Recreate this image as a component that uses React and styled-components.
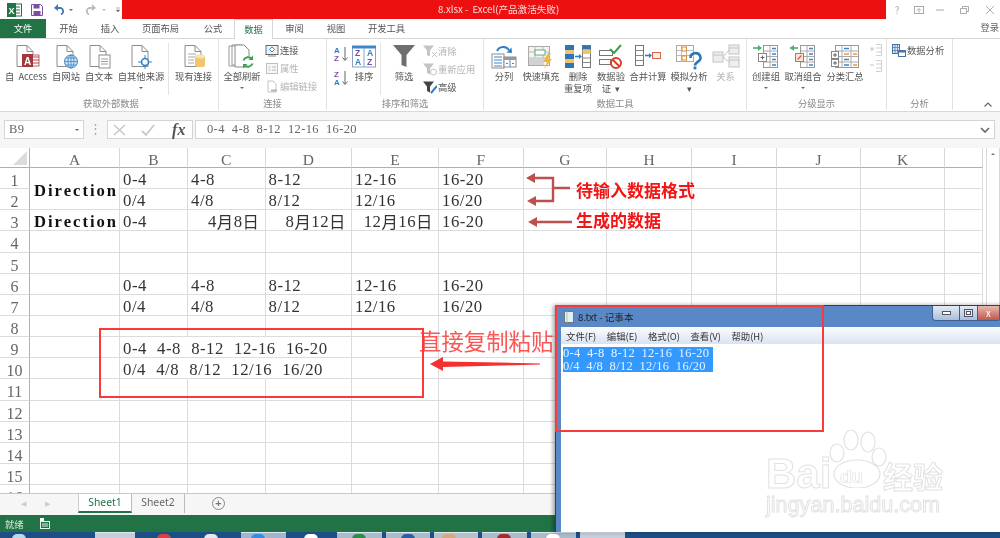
import React from "react";
import styled, { createGlobalStyle } from "styled-components";

const CJK = '"Noto Sans CJK SC", "Noto Sans", sans-serif';
const SERIF = '"Liberation Serif", "Noto Sans CJK SC", serif';

const Global = createGlobalStyle`
  html, body { margin: 0; padding: 0; background: #fff; overflow: hidden; }
  * { box-sizing: border-box; }
`;

const Page = styled.div`
  position: relative;
  width: 1000px;
  height: 538px;
  overflow: hidden;
  display: flex;
  flex-direction: column;
  font-family: ${CJK};
  font-size: 9.3px;
  color: #555;
  background: #fff;
  filter: blur(0.5px);
`;

/* title bar */
const TitleBar = styled.div`
  height: 19px;
  display: flex;
  flex: none;
`;
const Qat = styled.div`
  width: 122px;
  display: flex;
  align-items: center;
  padding-left: 7px;
`;
const QatSlot = styled.span`
  width: ${(p) => p.$w}px;
  display: flex;
  align-items: center;
`;
const Caret = styled.i`
  display: block;
  width: 0;
  height: 0;
  border-left: 2px solid transparent;
  border-right: 2px solid transparent;
  border-top: 2.5px solid ${(p) => p.$color || "#666"};
`;
const RedTitle = styled.div`
  width: 764px;
  background: #ec1010;
  color: #fdd;
  font-size: 9.6px;
  line-height: 19px;
  padding-left: 316px;
  white-space: pre;
`;
const WinButtons = styled.div`
  flex: 1;
  display: flex;
`;
const WinBtn = styled.span`
  width: ${(p) => p.$w}px;
  display: flex;
  align-items: center;
  justify-content: center;
  color: #aaa;
  font-size: 10px;
`;

/* tabs */
const TabRow = styled.div`
  height: 20px;
  flex: none;
  display: flex;
  border-bottom: 1px solid #d6d6d6;
`;
const Tab = styled.div`
  width: ${(p) => p.$w}px;
  height: ${(p) => (p.$active ? 20 : 19)}px;
  line-height: 19px;
  text-align: center;
  color: ${(p) => (p.$file ? "#fff" : p.$active ? "#217346" : "#555")};
  background: ${(p) => (p.$file ? "#217346" : "#fff")};
  border: ${(p) => (p.$active ? "1px solid #d6d6d6" : "none")};
  border-bottom: none;
  position: relative;
  z-index: 1;
`;
const Login = styled.div`
  margin-left: auto;
  line-height: 17px;
  padding-right: 1px;
  color: #666;
`;

/* ribbon */
const Ribbon = styled.div`
  height: 73px;
  flex: none;
  display: flex;
  border-bottom: 1px solid #d8d8d8;
`;
const Group = styled.section`
  width: ${(p) => p.$w}px;
  flex: none;
  display: flex;
  flex-direction: column;
  padding-left: ${(p) => p.$pad || 0}px;
  margin-bottom: 1px;
  border-right: 1px solid #e2e2e2;
`;
const GroupBody = styled.div`
  flex: 1;
  display: flex;
`;
const GroupLabel = styled.div`
  height: 13px;
  line-height: 13px;
  text-align: center;
  color: #888;
`;
const Big = styled.div`
  width: ${(p) => p.$w}px;
  flex: none;
  display: flex;
  flex-direction: column;
  align-items: center;
  padding-top: 5px;
  line-height: 12px;
  white-space: nowrap;
  word-spacing: 2px;
  color: ${(p) => (p.$off ? "#b5b5b5" : "#555")};
  svg { display: block; height: 26px; flex: none; }
`;
const Arrow = styled(Caret)`
  margin-top: 5px;
`;
const Divider = styled.div`
  width: 1px;
  flex: none;
  margin: 4px ${(p) => p.$m || 0}px 2px;
  background: #e4e4e4;
`;
const SmallCol = styled.div`
  width: ${(p) => p.$w}px;
  flex: none;
  display: flex;
  flex-direction: column;
  gap: ${(p) => p.$gap ?? 4}px;
  padding-top: ${(p) => p.$top ?? 4}px;
  padding-left: ${(p) => p.$left || 0}px;
`;
const Small = styled.div`
  height: 14px;
  display: flex;
  align-items: center;
  gap: 1px;
  white-space: nowrap;
  color: ${(p) => (p.$off ? "#b5b5b5" : "#555")};
  svg { flex: none; }
`;
const Collapse = styled.div`
  flex: 1;
  display: flex;
  align-items: flex-end;
  justify-content: flex-end;
  padding: 0 8px 4px 0;
`;

/* formula bar */
const FormulaBar = styled.div`
  height: 36px;
  flex: none;
  display: flex;
  align-items: flex-start;
  padding: 8px 5px 0 4px;
  background: #f6f6f6;
  font-family: ${SERIF};
  font-size: 12.5px;
  letter-spacing: 0.37px;
  word-spacing: 3.5px;
`;
const Field = styled.div`
  height: 19px;
  width: ${(p) => (p.$w ? `${p.$w}px` : "auto")};
  flex: ${(p) => (p.$w ? "none" : 1)};
  margin-left: ${(p) => p.$gap || 0}px;
  display: flex;
  align-items: center;
  background: #fff;
  border: 1px solid #d4d4d4;
  color: #666;
  padding: 0 4px;
`;
const FormulaText = styled.span`
  padding-left: 7px;
  margin-right: auto;
`;
const NameCaret = styled(Caret)`
  margin-left: auto;
`;
const Dots = styled.div`
  width: 23px;
  flex: none;
  text-align: center;
  line-height: 18px;
  color: #aaa;
`;
const Fx = styled.span`
  font-style: italic;
  font-weight: bold;
  font-size: 16px;
  color: #555;
  margin-left: auto;
  padding-right: 2px;
`;

/* sheet */
const SheetArea = styled.div`
  height: 345px;
  flex: none;
  display: flex;
  overflow: hidden;
`;
const Grid = styled.div`
  width: 983px;
  height: 345px;
  flex: none;
  display: grid;
  grid-template-columns: 30px 90px 68px 77.5px 86.5px 87px 84.5px 83.5px 85px 85px 84px 84px 38px;
  grid-template-rows: 20px repeat(16, 21.15px);
  font-family: ${SERIF};
  font-size: 16.8px;
  line-height: 21px;
  color: #333;
  overflow: hidden;
`;
const Corner = styled.div`
  position: relative;
  border-right: 1px solid #b0b0b0;
  border-bottom: 1px solid #b0b0b0;
  &::after {
    content: "";
    position: absolute;
    right: 2px;
    bottom: 2px;
    width: 0;
    height: 0;
    border-left: 14px solid transparent;
    border-bottom: 14px solid #dcdcdc;
  }
`;
const ColHead = styled.div`
  text-align: center;
  color: #666;
  font-size: 15.5px;
  line-height: 23px;
  border-right: 1px solid #d8d8d8;
  border-bottom: 1px solid #b0b0b0;
`;
const RowHead = styled.div`
  text-align: center;
  color: #666;
  font-size: 16px;
  line-height: 25px;
  border-right: 1px solid #b0b0b0;
  border-bottom: 1px solid #dcdcdc;
`;
const Cell = styled.div`
  grid-row: ${(p) => (p.$span ? `span ${p.$span}` : "auto")};
  display: flex;
  align-items: center;
  justify-content: ${(p) => (p.$right ? "flex-end" : "flex-start")};
  padding: 3px ${(p) => (p.$right ? 5 : 0)}px 0 ${(p) => (p.$bold ? 4 : 3)}px;
  white-space: pre;
  letter-spacing: ${(p) => (p.$bold ? 2 : 0.5)}px;
  word-spacing: 5.5px;
  min-width: 0;
  font-size: ${(p) => (p.$bold ? "16.6px" : "16.8px")};
  font-weight: ${(p) => (p.$bold ? 700 : 400)};
  color: ${(p) => (p.$bold ? "#111" : "#333")};
  border-right: 1px solid ${(p) => (p.$flow ? "transparent" : "#dcdcdc")};
  border-bottom: 1px solid #dcdcdc;
`;
const Wide = styled.span`
  font-family: ${CJK};
  font-size: 16.4px;
`;
const Scroll = styled.div`
  width: 14px;
  margin-left: 3px;
  flex: none;
  border: 1px solid #d8d8d8;
  border-top: none;
  display: flex;
  justify-content: center;
  padding-top: 5px;
`;
const ScrollUp = styled(Caret)`
  transform: rotate(180deg);
`;

/* sheet tabs and status */
const SheetTabs = styled.div`
  height: 22px;
  flex: none;
  display: flex;
  background: #f6f6f6;
  border-top: 1px solid #c8c8c8;
  font-family: "Noto Sans", sans-serif;
  font-size: 10.4px;
  color: #666;
`;
const NavArrow = styled.span`
  width: ${(p) => p.$w}px;
  flex: none;
  padding-left: ${(p) => p.$pad}px;
  line-height: 19px;
  color: #ccc;
  font-size: 7px;
`;
const SheetTab = styled.div`
  width: ${(p) => p.$w}px;
  height: 19px;
  flex: none;
  line-height: 17px;
  text-align: center;
  color: ${(p) => (p.$active ? "#217346" : "#666")};
  background: ${(p) => (p.$active ? "#fff" : "transparent")};
  border-bottom: ${(p) => (p.$active ? "2px solid #217346" : "none")};
  border-left: ${(p) => (p.$active ? "1px solid #ccc" : "none")};
  border-right: 1px solid #bbb;
`;
const AddSheet = styled.div`
  margin: 3px 0 0 27px;
  width: 13px;
  height: 13px;
  border: 1px solid #888;
  border-radius: 50%;
  text-align: center;
  line-height: 10px;
  font-size: 11px;
  font-weight: 700;
  color: #777;
`;
const StatusBar = styled.div`
  height: 17px;
  flex: none;
  background: #217346;
  color: #d8e8df;
  display: flex;
  align-items: center;
  gap: 16px;
  padding-left: 5px;
`;
const Taskbar = styled.div`
  height: 6px;
  flex: none;
  display: flex;
  background: #1d4f86;
`;
const TaskBtn = styled.div`
  position: relative;
  width: ${(p) => p.$w}px;
  flex: none;
  margin-right: ${(p) => p.$gap || 0}px;
  background: ${(p) => p.$bg || "transparent"};
  border-top: 1px solid ${(p) => (p.$bg ? "#dfe7f0" : "transparent")};
  &::after {
    content: "";
    position: absolute;
    left: ${(p) => p.$dotX || 0}px;
    top: 1px;
    width: ${(p) => (p.$dot ? 14 : 0)}px;
    height: 8px;
    border-radius: 5px 5px 0 0;
    background: ${(p) => p.$dot || "none"};
  }
`;

/* notepad window */
const Notepad = styled.div`
  position: absolute;
  left: 555px;
  top: 305px;
  width: 452px;
  height: 227px;
  display: flex;
  flex-direction: column;
  background: #5a88c6;
  border: 1px solid #3d3d3d;
  border-right: none;
  border-bottom: none;
  box-shadow: -2px 0 4px rgba(0, 0, 0, 0.35);
  padding: 0 0 0 5px;
`;
const NoteTitle = styled.div`
  height: 21px;
  flex: none;
  display: flex;
  align-items: center;
  gap: 4px;
  padding-left: 3px;
  color: #222;
  font-size: 9.6px;
`;
const NoteButtons = styled.div`
  margin-left: auto;
  margin-right: 6px;
  align-self: flex-start;
  display: flex;
  height: 15px;
  border: 1px solid #3f5f8f;
  border-top: none;
  border-radius: 0 0 4px 4px;
  overflow: hidden;
`;
const NoteBtn = styled.span`
  width: ${(p) => p.$w}px;
  display: flex;
  align-items: center;
  justify-content: center;
  color: #fff;
  background: ${(p) => p.$bg || "linear-gradient(#e4ebf4, #a9bfdb)"};
  border-right: 1px solid #3f5f8f;
`;
const NoteMenu = styled.div`
  height: 17px;
  flex: none;
  display: flex;
  align-items: center;
  padding-left: 5px;
  gap: 10.5px;
  background: linear-gradient(#fbfcfe, #d9e3f2);
  color: #333;
  font-size: 9.4px;
  white-space: nowrap;
`;
const NoteBody = styled.div`
  flex: 1;
  background: #fff;
  padding: 3px 0 0 2px;
  font-family: ${SERIF};
  font-size: 12.5px;
  letter-spacing: 0.3px;
  word-spacing: 3px;
  line-height: 12.5px;
`;
const Picked = styled.div`
  width: 150px;
  background: #3399ff;
  color: #e8f3ff;
  white-space: pre;
`;

/* overlays */
const RedBox = styled.div`
  position: absolute;
  left: ${(p) => p.$x}px;
  top: ${(p) => p.$y}px;
  width: ${(p) => p.$w}px;
  height: ${(p) => p.$h}px;
  border: 2px solid #f83a3a;
  pointer-events: none;
`;
const Note = styled.div`
  position: absolute;
  left: ${(p) => p.$x}px;
  top: ${(p) => p.$y}px;
  font-family: ${CJK};
  white-space: nowrap;
  color: #f31414;
  font-weight: 700;
  font-size: 17px;
  line-height: 20px;
`;
const PasteNote = styled(Note)`
  font-weight: 400;
  font-size: 22.4px;
  line-height: 28px;
  color: #fb5555;
`;
const ArrowLayer = styled.svg`
  position: absolute;
  left: 520px;
  top: 170px;
`;
const PasteArrow = styled.svg`
  position: absolute;
  left: 428px;
  top: 356px;
`;
const Watermark = styled.div`
  position: absolute;
  left: 766px;
  top: 428px;
  width: 186px;
  height: 90px;
  color: #fff;
  -webkit-text-stroke: 1px #e2e2e2;
  font-family: "Liberation Sans", sans-serif;
  font-weight: 700;
`;
const MarkBai = styled.span`
  position: absolute;
  left: 0;
  top: 29px;
  font-size: 42px;
  line-height: 34px;
`;
const MarkCn = styled.span`
  position: absolute;
  left: 117px;
  top: 31px;
  font-family: ${CJK};
  font-size: 30px;
  line-height: 32px;
`;
const MarkUrl = styled.span`
  position: absolute;
  left: 0;
  top: 65px;
  font-size: 21.6px;
  line-height: 24px;
  font-weight: 400;
  white-space: nowrap;
`;
const MarkPaw = styled.svg`
  position: absolute;
  left: 62px;
  top: 0;
`;
const MarkDu = styled.span`
  position: absolute;
  left: 74px;
  top: 39px;
  font-size: 19px;
  line-height: 20px;
  -webkit-text-stroke: 0.7px #e2e2e2;
`;

/* icons */
const Doc = ({ children, w = 28 }) => (
  <svg width={w} height="26" viewBox={`0 0 ${w} 26`}>
    <path d="M5 1.5h10l6 6v15H5z" fill="#fff" stroke="#8c8c8c" />
    <path d="M15 1.5v6h6" fill="none" stroke="#8c8c8c" />
    {children}
  </svg>
);
const AccessIcon = () => (
  <Doc>
    <rect x="14" y="11" width="13" height="11" fill="#fff" stroke="#b86a6c" />
    <path d="M21 13h6M21 16h6M21 19h6" stroke="#b04a4d" />
    <rect x="10" y="10" width="11" height="13" fill="#a4373a" />
    <text x="12" y="20.5" fontSize="10" fontWeight="700" fill="#fff" fontFamily="Liberation Sans">A</text>
  </Doc>
);
const WebIcon = () => (
  <Doc>
    <circle cx="19" cy="17.5" r="6.5" fill="#cfe3f5" stroke="#3f86c8" />
    <path d="M12.5 17.5h13M19 11v13M14 14h10M14 21h10" stroke="#3f86c8" strokeWidth=".8" />
    <ellipse cx="19" cy="17.5" rx="3" ry="6.5" fill="none" stroke="#3f86c8" strokeWidth=".8" />
  </Doc>
);
const TextIcon = () => (
  <Doc>
    <rect x="14" y="11" width="11" height="13" fill="#fff" stroke="#8c8c8c" />
    <path d="M16 15h7M16 17.5h7M16 20h7" stroke="#999" />
  </Doc>
);
const OtherIcon = () => (
  <Doc>
    <path d="M18 11v14M11 18h14" stroke="#3f86c8" />
    <circle cx="18" cy="18" r="3.5" fill="#fff" stroke="#2f7fc8" strokeWidth="1.6" />
  </Doc>
);
const ExistingIcon = () => (
  <Doc>
    <path d="M8 10h8M8 13h8M8 16h6M8 19h6" stroke="#aaa" />
    <rect x="15" y="12" width="10" height="11" rx="2" fill="#f0c56c" />
    <ellipse cx="20" cy="12.5" rx="5" ry="2" fill="#f8e2ae" />
  </Doc>
);
const RefreshIcon = () => (
  <svg width="30" height="26" viewBox="0 0 30 26">
    <path d="M2 2h10v20H2z M5 1h10v20H5z" fill="#fff" stroke="#999" />
    <path d="M8 1h9l5 5v17H8z" fill="#fff" stroke="#8c8c8c" />
    <circle cx="21" cy="18" r="6" fill="#fff" />
    <path d="M16.5 16.5a5 5 0 0 1 8.5-1.5M25.5 19.5a5 5 0 0 1-8.5 1.5" fill="none" stroke="#3ea04e" strokeWidth="2" />
    <path d="M26 11.5v4.5h-4.5zM16 24.5V20h4.5z" fill="#3ea04e" />
  </svg>
);
const ConnIcon = () => (
  <svg width="14" height="13" viewBox="0 0 14 13">
    <rect x="1" y="1.5" width="12" height="9" fill="#eaf1f8" stroke="#6a6a6a" />
    <path d="M7 3l2.5 2.5L7 8 4.5 5.5z" fill="#fff" stroke="#3f86c8" />
    <path d="M3 12h8" stroke="#888" />
  </svg>
);
const PropIcon = () => (
  <svg width="14" height="13" viewBox="0 0 14 13">
    <rect x="1.5" y="1.5" width="11" height="10" fill="#f6f6f6" stroke="#c0c0c0" />
    <path d="M3.5 5h2M3.5 8h2M7 5h4M7 8h4" stroke="#bbb" />
  </svg>
);
const LinkIcon = () => (
  <svg width="14" height="13" viewBox="0 0 14 13">
    <path d="M3 1h5l3 3v8H3z" fill="#fff" stroke="#c4c4c4" />
    <path d="M6 10.5h6" stroke="#b5b5b5" strokeWidth="2" />
  </svg>
);
const SortSmall = ({ top, bottom, cTop, cBottom }) => (
  <svg width="18" height="18" viewBox="0 0 18 18">
    <text x="1" y="8" fontSize="8" fontWeight="700" fill={cTop} fontFamily="Liberation Sans">{top}</text>
    <text x="1" y="16" fontSize="8" fontWeight="700" fill={cBottom} fontFamily="Liberation Sans">{bottom}</text>
    <path d="M12 2v13M9.5 12.5L12 15.5l2.5-3" fill="none" stroke="#666" />
  </svg>
);
const SortBig = () => (
  <svg width="24" height="26" viewBox="0 0 24 26">
    <rect x=".5" y="3" width="23" height="20" fill="#fff" stroke="#8ba4bd" />
    <rect x="0" y="1.5" width="24" height="3" fill="#3f86c8" />
    <path d="M12 4v19" stroke="#8ba4bd" />
    <g fontSize="8.5" fontWeight="700" fontFamily="Liberation Sans">
      <text x="3" y="12" fill="#7b4ea3">Z</text>
      <text x="3" y="21" fill="#2f7fc8">A</text>
      <text x="15" y="12" fill="#2f7fc8">A</text>
      <text x="15" y="21" fill="#7b4ea3">Z</text>
    </g>
  </svg>
);
const Funnel = () => (
  <svg width="24" height="26" viewBox="0 0 24 26">
    <path d="M1 1h22L14.5 11v12l-5-2V11z" fill="#6e6e6e" />
  </svg>
);
const SmallFunnel = ({ color = "#c4c4c4", children }) => (
  <svg width="14" height="13" viewBox="0 0 14 13">
    <path d="M0 .5h11L7 5.5v6l-3-1.5V5.5z" fill={color} />
    {children}
  </svg>
);
const SplitIcon = () => (
  <svg width="26" height="26" viewBox="0 0 26 26">
    <path d="M6 7a7 7 0 0 1 12-1" fill="none" stroke="#2f7fc8" strokeWidth="2" />
    <path d="M15.5 8.5L21 9l-.5-5.5z" fill="#2f7fc8" />
    <rect x="1" y="10" width="12" height="14" fill="#fff" stroke="#8c8c8c" />
    <path d="M3 13h8M3 16h8M3 19h8M3 22h8" stroke="#3f86c8" />
    <rect x="13" y="13" width="12" height="10" fill="#fff" stroke="#8c8c8c" />
    <rect x="13" y="13" width="12" height="3" fill="#999" />
    <path d="M19 16v7M15 19.5h2M21 19.5h2" stroke="#3f86c8" />
  </svg>
);
const FlashIcon = () => (
  <svg width="26" height="26" viewBox="0 0 26 26">
    <rect x=".5" y="2.5" width="21" height="19" fill="#f3f3f3" stroke="#aaa" />
    <path d="M.5 8h21M.5 14h21M7 2.5v19M15 2.5v19" stroke="#bbb" />
    <rect x="7" y="6" width="10" height="5" fill="#fff" stroke="#67a87a" />
    <rect x="1" y="14" width="14" height="7" fill="#d2d2d2" />
    <path d="M20 9l-5 9h4l-3 7 8-10h-4l3-6z" fill="#f2b63c" />
  </svg>
);
const DedupeIcon = () => (
  <svg width="28" height="26" viewBox="0 0 28 26">
    <rect x="1" y="1" width="9" height="23" fill="#2e75b6" />
    <rect x="1" y="6" width="9" height="4" fill="#efc46d" />
    <rect x="1" y="15" width="9" height="4" fill="#efc46d" />
    <rect x="18.5" y="1.5" width="8" height="22" fill="#fff" stroke="#777" />
    <rect x="18.5" y="1.5" width="8" height="4" fill="#2e75b6" />
    <rect x="18.5" y="6" width="8" height="4" fill="#efc46d" />
    <path d="M19 14h7M19 18.5h7" stroke="#888" />
    <path d="M11 12.5h5" stroke="#2f7fc8" strokeWidth="1.6" />
    <path d="M15 10l3 2.5-3 2.5z" fill="#2f7fc8" />
  </svg>
);
const ValidIcon = () => (
  <svg width="24" height="26" viewBox="0 0 24 26">
    <rect x=".5" y="6.5" width="13" height="5" fill="#fff" stroke="#777" />
    <rect x=".5" y="15.5" width="11" height="5" fill="#fff" stroke="#777" />
    <path d="M11 5l4 4 7-8" fill="none" stroke="#3ea04e" strokeWidth="2" />
    <circle cx="17" cy="19" r="5" fill="#fff" stroke="#d5402b" strokeWidth="2" />
    <path d="M13.5 15.5l7 7" stroke="#d5402b" strokeWidth="2" />
  </svg>
);
const MergeIcon = () => (
  <svg width="28" height="26" viewBox="0 0 28 26">
    <rect x="1.5" y="1.5" width="8" height="20" fill="#fff" stroke="#777" />
    <path d="M2 6.5h7M2 11.5h7M2 16.5h7" stroke="#888" />
    <path d="M11 11.5h5" stroke="#2f7fc8" strokeWidth="1.6" />
    <path d="M15 9l3 2.5-3 2.5z" fill="#2f7fc8" />
    <rect x="18.5" y="8.5" width="8" height="6" fill="#fbeee8" stroke="#d9674a" />
  </svg>
);
const WhatIfIcon = () => (
  <svg width="28" height="26" viewBox="0 0 28 26">
    <rect x="1.5" y="1.5" width="17" height="16" fill="#fff" stroke="#aaa" />
    <path d="M1.5 6.5h17M1.5 11.5h17M6.5 1.5v16M11.5 1.5v16" stroke="#bbb" />
    <rect x="7" y="3" width="4.5" height="4" fill="#fff" stroke="#e58a2c" />
    <rect x="7" y="12" width="4.5" height="4" fill="#fff" stroke="#e58a2c" />
    <path d="M15.5 14a5 4.5 0 1 1 7.5 3.6c-2 1.3-3 2-3 3.9" fill="none" stroke="#2e75b6" strokeWidth="2.6" />
    <rect x="18.6" y="22.5" width="2.8" height="2.8" fill="#2e75b6" />
  </svg>
);
const RelIcon = () => (
  <svg width="28" height="26" viewBox="0 0 28 26">
    <rect x="1" y="8" width="10" height="10" fill="#eee" stroke="#c4c4c4" />
    <rect x="17" y="1" width="10" height="9" fill="#eee" stroke="#c4c4c4" />
    <rect x="17" y="13" width="10" height="10" fill="#eee" stroke="#c4c4c4" />
    <path d="M1 11h10M17 4h10M17 16h10M11 13l6-7M11 13l6 5" stroke="#c4c4c4" />
  </svg>
);
const OutlineIcon = ({ arrow, box }) => (
  <svg width="26" height="26" viewBox="0 0 26 26">
    <rect x="10.5" y="1.5" width="14" height="22" fill="#fff" stroke="#999" />
    <path d="M17 1.5v22M11 7h13M11 12.5h13M11 18h13" stroke="#aaa" />
    <path d="M19 4.5h4M19 10h4M19 15.5h4M19 21h4" stroke="#3f86c8" strokeWidth="1.4" />
    <rect x="5.5" y="9.5" width="8" height="8" fill={box === "red" ? "#fbe3da" : "#fff"} stroke={box === "red" ? "#d9674a" : "#888"} />
    {box === "red" ? (
      <path d="M7.5 15.5l4-4" stroke="#d9674a" strokeWidth="1.4" />
    ) : (
      <path d="M7.5 13.5h4M9.5 11.5v4" stroke="#666" />
    )}
    <path d="M0 4h8" stroke={arrow} strokeWidth="1.6" />
    {box === "red" ? (
      <path d="M0 4l4-3v6z" fill={arrow} />
    ) : (
      <path d="M9 4L5 1v6z" fill={arrow} />
    )}
  </svg>
);
const SubtotalIcon = () => (
  <svg width="30" height="26" viewBox="0 0 30 26">
    <rect x="5.5" y="1.5" width="23" height="22" fill="#fff" stroke="#999" />
    <path d="M12 1.5v22M21 1.5v22M6 7h22M6 12.5h22M6 18h22" stroke="#aaa" />
    <path d="M14 4.5h5M14 15.5h5M14 21h5" stroke="#3f86c8" strokeWidth="1.4" />
    <path d="M14 10h5M23 10h4M23 21h4" stroke="#ec9a3a" strokeWidth="1.4" />
    <rect x="1.5" y="7.5" width="7" height="7" fill="#fff" stroke="#888" />
    <rect x="1.5" y="15.5" width="7" height="7" fill="#fff" stroke="#888" />
    <path d="M3 11h4M5 9v4M3 19h4M5 17v4" stroke="#666" />
  </svg>
);
const Fold = ({ plus }) => (
  <svg width="14" height="14" viewBox="0 0 14 14">
    <path d="M1 6h4" stroke="#c4c4c4" />
    {plus && <path d="M3 4v4" stroke="#c4c4c4" />}
    <path d="M7 1.5h5.5v11H7M7 5h5M7 9h5" fill="none" stroke="#d0d0d0" />
  </svg>
);
const AnalyzeIcon = () => (
  <svg width="14" height="13" viewBox="0 0 14 13">
    <rect x=".5" y=".5" width="7" height="9" fill="#dbe6f2" stroke="#4a73a5" />
    <path d="M3 .5v9M5.5 .5v9M.5 3.5h7M.5 6.5h7" stroke="#4a73a5" strokeWidth=".7" />
    <rect x="6.5" y="6.5" width="7" height="6" fill="#fff" stroke="#4a73a5" />
    <rect x="6.5" y="6.5" width="7" height="2" fill="#4a73a5" />
  </svg>
);

const groups = {
  ext: [
    ["自 Access", 44, <AccessIcon />],
    ["自网站", 36, <WebIcon />],
    ["自文本", 30, <TextIcon />],
  ],
  tools: [
    ["分列", 40, <SplitIcon />],
    ["快速填充", 34, <FlashIcon />],
    ["删除", 40, <DedupeIcon />, "重复项"],
    ["数据验", 26, <ValidIcon />, "证 ▾"],
    ["合并计算", 48, <MergeIcon />],
    ["模拟分析", 34, <WhatIfIcon />, "▾"],
    ["关系", 39, <RelIcon />, null, true],
  ],
};

const BigButton = ({ w, icon, label, second, off, arrow }) => (
  <Big $w={w} $off={off}>
    {icon}
    <span>{label}</span>
    {second && <span>{second}</span>}
    {arrow && <Arrow />}
  </Big>
);

const COLS = ["A", "B", "C", "D", "E", "F", "G", "H", "I", "J", "K", ""];
const dashes = ["0-4", "4-8", "8-12", "12-16", "16-20"];
const slashes = ["0/4", "4/8", "8/12", "12/16", "16/20"];
const dated = [
  "0-4",
  { a: "4", b: "8" },
  { a: "8", b: "12" },
  { a: "12", b: "16" },
  "16-20",
];
const rowData = { 1: dashes, 2: slashes, 3: dated, 6: dashes, 7: slashes };
const flowRows = {
  9: "0-4 4-8 8-12 12-16 16-20",
  10: "0/4 4/8 8/12 12/16 16/20",
};

const sheetRow = (r) => {
  const out = [<RowHead key={`h${r}`}>{r}</RowHead>];
  COLS.forEach((c, i) => {
    const key = `${c}${r}${i}`;
    if (i === 0) {
      if (r === 1) out.push(<Cell key={key} $span={2} $bold>Direction</Cell>);
      else if (r === 3) out.push(<Cell key={key} $bold>Direction</Cell>);
      else if (r !== 2) out.push(<Cell key={key} />);
      return;
    }
    const v = rowData[r] && rowData[r][i - 1];
    if (flowRows[r] && i === 1) {
      out.push(<Cell key={key} $flow>{flowRows[r]}</Cell>);
    } else if (flowRows[r] && i < 5) {
      out.push(<Cell key={key} $flow={i < 3} />);
    } else if (v && v.a) {
      out.push(
        <Cell key={key} $right>
          {v.a}<Wide>月</Wide>{v.b}<Wide>日</Wide>
        </Cell>
      );
    } else {
      out.push(<Cell key={key}>{v}</Cell>);
    }
  });
  return out;
};

export default function App() {
  return (
    <Page>
      <Global />
      <TitleBar>
        <Qat>
          <QatSlot $w={24}>
            <svg width="15" height="14" viewBox="0 0 15 14">
              <rect x="6" y="1" width="8.5" height="12" fill="#fff" stroke="#217346" />
              <path d="M8 4h5M8 7h5M8 10h5" stroke="#217346" />
              <rect x="0" y="0" width="9" height="14" fill="#217346" />
              <text x="1.5" y="10.5" fontSize="9" fontWeight="700" fill="#fff" fontFamily="Liberation Sans">X</text>
            </svg>
          </QatSlot>
          <QatSlot $w={23}>
            <svg width="12" height="12" viewBox="0 0 12 12">
              <path d="M.5.5h9l2 2v9H.5z" fill="#fff" stroke="#7b4ea3" />
              <rect x="2.5" y="1" width="6" height="3.5" fill="#7b4ea3" />
              <rect x="2.5" y="7" width="7" height="4.5" fill="#7b4ea3" />
            </svg>
          </QatSlot>
          <QatSlot $w={15}>
            <svg width="12" height="11" viewBox="0 0 12 11">
              <path d="M2 4h5a3.5 3.5 0 0 1 0 6.5" fill="none" stroke="#3f78b5" strokeWidth="1.8" />
              <path d="M0 4l4-4v7z" fill="#3f78b5" />
            </svg>
          </QatSlot>
          <QatSlot $w={15}><Caret /></QatSlot>
          <QatSlot $w={18}>
            <svg width="12" height="11" viewBox="0 0 12 11">
              <path d="M10 4H5a3.5 3.5 0 0 0 0 6.5" fill="none" stroke="#bbb" strokeWidth="1.8" />
              <path d="M12 4L8 0v7z" fill="#bbb" />
            </svg>
          </QatSlot>
          <QatSlot $w={14}><Caret $color="#bbb" /></QatSlot>
          <QatSlot $w={4}>
            <svg width="5" height="6" viewBox="0 0 5 6">
              <path d="M0 .5h5M.5 3h4L2.5 5.5z" fill="#666" stroke="#666" strokeWidth=".6" />
            </svg>
          </QatSlot>
        </Qat>
        <RedTitle>8.xlsx -  Excel(产品激活失败)</RedTitle>
        <WinButtons>
          <WinBtn $w={22}>?</WinBtn>
          <WinBtn $w={21}>
            <svg width="10" height="8" viewBox="0 0 10 8">
              <rect x=".5" y=".5" width="9" height="7" fill="none" stroke="#aaa" />
              <path d="M5 6.5V3M3 4.5l2-2 2 2" fill="none" stroke="#aaa" />
            </svg>
          </WinBtn>
          <WinBtn $w={21}>
            <svg width="8" height="2" viewBox="0 0 8 2"><path d="M0 1h8" stroke="#aaa" /></svg>
          </WinBtn>
          <WinBtn $w={29}>
            <svg width="9" height="8" viewBox="0 0 9 8">
              <path d="M2.5 2V.5h6v5H7M.5 2.5h6v5h-6z" fill="none" stroke="#aaa" />
            </svg>
          </WinBtn>
          <WinBtn $w={21}>
            <svg width="8" height="8" viewBox="0 0 8 8"><path d="M0 0l8 8M8 0L0 8" stroke="#aaa" /></svg>
          </WinBtn>
        </WinButtons>
      </TitleBar>

      <TabRow>
        <Tab $w={46} $file>文件</Tab>
        <Tab $w={45}>开始</Tab>
        <Tab $w={38}>插入</Tab>
        <Tab $w={63}>页面布局</Tab>
        <Tab $w={42}>公式</Tab>
        <Tab $w={39} $active>数据</Tab>
        <Tab $w={43}>审阅</Tab>
        <Tab $w={40}>视图</Tab>
        <Tab $w={61}>开发工具</Tab>
        <Login>登录</Login>
      </TabRow>

      <Ribbon>
        <Group $w={219} $pad={4}>
          <GroupBody>
            {groups.ext.map(([label, w, icon]) => (
              <BigButton key={label} label={label} w={w} icon={icon} />
            ))}
            <BigButton label="自其他来源" w={54} icon={<OtherIcon />} arrow />
            <Divider />
            <BigButton label="现有连接" w={49} icon={<ExistingIcon />} />
          </GroupBody>
          <GroupLabel>获取外部数据</GroupLabel>
        </Group>
        <Group $w={108}>
          <GroupBody>
            <BigButton label="全部刷新" w={46} icon={<RefreshIcon />} arrow />
            <SmallCol $w={60}>
              <Small><ConnIcon />连接</Small>
              <Small $off><PropIcon />属性</Small>
              <Small $off><LinkIcon />编辑链接</Small>
            </SmallCol>
          </GroupBody>
          <GroupLabel>连接</GroupLabel>
        </Group>
        <Group $w={157}>
          <GroupBody>
            <SmallCol $w={25} $gap={6} $top={6} $left={6}>
              <SortSmall top="A" bottom="Z" cTop="#2f7fc8" cBottom="#7b4ea3" />
              <SortSmall top="Z" bottom="A" cTop="#7b4ea3" cBottom="#2f7fc8" />
            </SmallCol>
            <BigButton label="排序" w={24} icon={<SortBig />} />
            <Divider $m={4} />
            <BigButton label="筛选" w={38} icon={<Funnel />} />
            <SmallCol $w={55} $top={5}>
              <Small $off>
                <SmallFunnel><path d="M9 7l5 5M14 7l-5 5" stroke="#c4c4c4" /></SmallFunnel>清除
              </Small>
              <Small $off>
                <SmallFunnel><circle cx="10.5" cy="9" r="3" fill="none" stroke="#c4c4c4" /></SmallFunnel>重新应用
              </Small>
              <Small>
                <SmallFunnel color="#444"><path d="M8 12l6-7" stroke="#2f7fc8" strokeWidth="2" /></SmallFunnel>高级
              </Small>
            </SmallCol>
          </GroupBody>
          <GroupLabel>排序和筛选</GroupLabel>
        </Group>
        <Group $w={263}>
          <GroupBody>
            {groups.tools.map(([label, w, icon, second, off]) => (
              <BigButton
                key={label}
                label={label}
                w={w}
                icon={icon}
                second={second}
                off={off}
              />
            ))}
          </GroupBody>
          <GroupLabel>数据工具</GroupLabel>
        </Group>
        <Group $w={140}>
          <GroupBody>
            <BigButton label="创建组" w={38} icon={<OutlineIcon arrow="#4caf6a" />} arrow />
            <BigButton label="取消组合" w={36} icon={<OutlineIcon arrow="#4caf6a" box="red" />} arrow />
            <BigButton label="分类汇总" w={48} icon={<SubtotalIcon />} />
            <SmallCol $w={17} $gap={2} $top={4}>
              <Fold plus />
              <Fold />
            </SmallCol>
          </GroupBody>
          <GroupLabel>分级显示</GroupLabel>
        </Group>
        <Group $w={66}>
          <GroupBody>
            <SmallCol $w={66} $top={4} $left={5}>
              <Small><AnalyzeIcon />数据分析</Small>
            </SmallCol>
          </GroupBody>
          <GroupLabel>分析</GroupLabel>
        </Group>
        <Collapse>
          <svg width="8" height="5" viewBox="0 0 8 5">
            <path d="M.5 4.5L4 1l3.5 3.5" fill="none" stroke="#666" strokeWidth="1.2" />
          </svg>
        </Collapse>
      </Ribbon>

      <FormulaBar>
        <Field $w={80}>
          B9
          <NameCaret />
        </Field>
        <Dots>⋮</Dots>
        <Field $w={86}>
          <svg width="48" height="14" viewBox="0 0 48 14">
            <path d="M2 2l11 10M13 2L2 12" stroke="#c8c8c8" strokeWidth="1.6" />
            <path d="M30 8l4 4 8-10" fill="none" stroke="#c8c8c8" strokeWidth="1.8" />
          </svg>
          <Fx>fx</Fx>
        </Field>
        <Field $gap={2}>
          <FormulaText>0-4 4-8 8-12 12-16 16-20</FormulaText>
          <svg width="10" height="6" viewBox="0 0 10 6">
            <path d="M1 1l4 4 4-4" fill="none" stroke="#666" strokeWidth="1.6" />
          </svg>
        </Field>
      </FormulaBar>

      <SheetArea>
        <Grid>
          <Corner />
          {COLS.map((c, i) => (
            <ColHead key={i}>{c}</ColHead>
          ))}
          {Array.from({ length: 16 }, (_, i) => sheetRow(i + 1))}
        </Grid>
        <Scroll>
          <ScrollUp $color="#777" />
        </Scroll>
      </SheetArea>

      <SheetTabs>
        <NavArrow $w={42} $pad={21}>◀</NavArrow>
        <NavArrow $w={36} $pad={3}>▶</NavArrow>
        <SheetTab $w={54} $active>Sheet1</SheetTab>
        <SheetTab $w={53}>Sheet2</SheetTab>
        <AddSheet>+</AddSheet>
      </SheetTabs>
      <StatusBar>
        <span>就绪</span>
        <svg width="10" height="11" viewBox="0 0 10 11">
          <rect x="0" y="0" width="4" height="4" fill="#fff" />
          <rect x=".5" y="3.5" width="9" height="7" fill="none" stroke="#e6efe9" />
          <path d="M2 6h6M2 8h6" stroke="#e6efe9" />
        </svg>
      </StatusBar>
      <Taskbar>
        <TaskBtn $w={95} $dot="#b8d8ee" $dotX={12} />
        <TaskBtn $w={40} $bg="#c5cfdb" $gap={4} />
        <TaskBtn $w={50} $dot="#d8443c" $dotX={18} />
        <TaskBtn $w={52} $dot="#e8e8e8" $dotX={15} />
        <TaskBtn $w={45} $bg="#9fb6d0" $dot="#2c8fe8" $dotX={10} />
        <TaskBtn $w={51} $dot="#fff" $dotX={18} />
        <TaskBtn $w={45} $bg="#a9bccb" $gap={4} $dot="#2e8b4a" $dotX={15} />
        <TaskBtn $w={44} $bg="#a9bccb" $gap={4} $dot="#2a5fa8" $dotX={15} />
        <TaskBtn $w={44} $bg="#b6c0c8" $gap={4} $dot="#d8a878" $dotX={8} />
        <TaskBtn $w={45} $bg="#a9bccb" $gap={4} $dot="#a02c2c" $dotX={15} />
        <TaskBtn $w={45} $bg="#a9bccb" $gap={4} $dot="#ffffff" $dotX={15} />
        <TaskBtn $w={45} $bg="#c5cfdb" />
      </Taskbar>

      <Note $x={576} $y={180}>待输入数据格式</Note>
      <Note $x={576} $y={210}>生成的数据</Note>
      <ArrowLayer width="60" height="64" viewBox="0 0 60 64">
        <g stroke="#bd4f4f" strokeWidth="2.4" fill="none">
          <path d="M12 8h21v23H12M33 18h17" />
          <path d="M14 52h38" />
        </g>
        <path d="M6 8l9-5v10zM7 31l9-5v10zM8 52l9-5v10z" fill="#bd4f4f" />
      </ArrowLayer>
      <PasteNote $x={419} $y={326}>直接复制粘贴</PasteNote>
      <PasteArrow width="114" height="16" viewBox="0 0 114 16">
        <path d="M2 8l13-7v4.5L112 7.4v1.2L15 11v4z" fill="#f53030" />
      </PasteArrow>
      <RedBox $x={99} $y={328} $w={325} $h={70} />

      <Notepad>
        <NoteTitle>
          <svg width="10" height="12" viewBox="0 0 10 12">
            <rect x=".5" y=".5" width="9" height="11" fill="#dff0ee" stroke="#777" />
            <path d="M3 .5v11" stroke="#9cc" />
          </svg>
          8.txt - 记事本
          <NoteButtons>
            <NoteBtn $w={27}>
              <svg width="9" height="4" viewBox="0 0 9 4">
                <rect x=".5" y=".5" width="8" height="3" fill="#fff" stroke="#556" />
              </svg>
            </NoteBtn>
            <NoteBtn $w={18}>
              <svg width="9" height="8" viewBox="0 0 9 8">
                <rect x=".5" y=".5" width="8" height="7" fill="#dfe8f3" stroke="#556" />
                <rect x="2.5" y="2.5" width="4" height="3" fill="#fff" stroke="#556" />
              </svg>
            </NoteBtn>
            <NoteBtn $w={22} $bg="linear-gradient(#e8b8b0, #c0574a)">x</NoteBtn>
          </NoteButtons>
        </NoteTitle>
        <NoteMenu>
          <span>文件(F)</span>
          <span>编辑(E)</span>
          <span>格式(O)</span>
          <span>查看(V)</span>
          <span>帮助(H)</span>
        </NoteMenu>
        <NoteBody>
          <Picked>0-4 4-8 8-12 12-16 16-20</Picked>
          <Picked>0/4 4/8 8/12 12/16 16/20</Picked>
        </NoteBody>
      </Notepad>
      <RedBox $x={555} $y={305} $w={269} $h={127} />

      <Watermark>
        <MarkPaw width="60" height="60" viewBox="0 0 60 60">
          <g fill="#fff" stroke="#e2e2e2" strokeWidth="1.2">
            <ellipse cx="9" cy="25" rx="7" ry="9" />
            <ellipse cx="23" cy="12" rx="7" ry="10" />
            <ellipse cx="40" cy="14" rx="7" ry="10" />
            <ellipse cx="51" cy="29" rx="7" ry="9" />
            <ellipse cx="29" cy="46" rx="23" ry="14" />
          </g>
        </MarkPaw>
        <MarkBai>Bai</MarkBai>
        <MarkDu>du</MarkDu>
        <MarkCn>经验</MarkCn>
        <MarkUrl>jingyan.baidu.com</MarkUrl>
      </Watermark>
    </Page>
  );
}
